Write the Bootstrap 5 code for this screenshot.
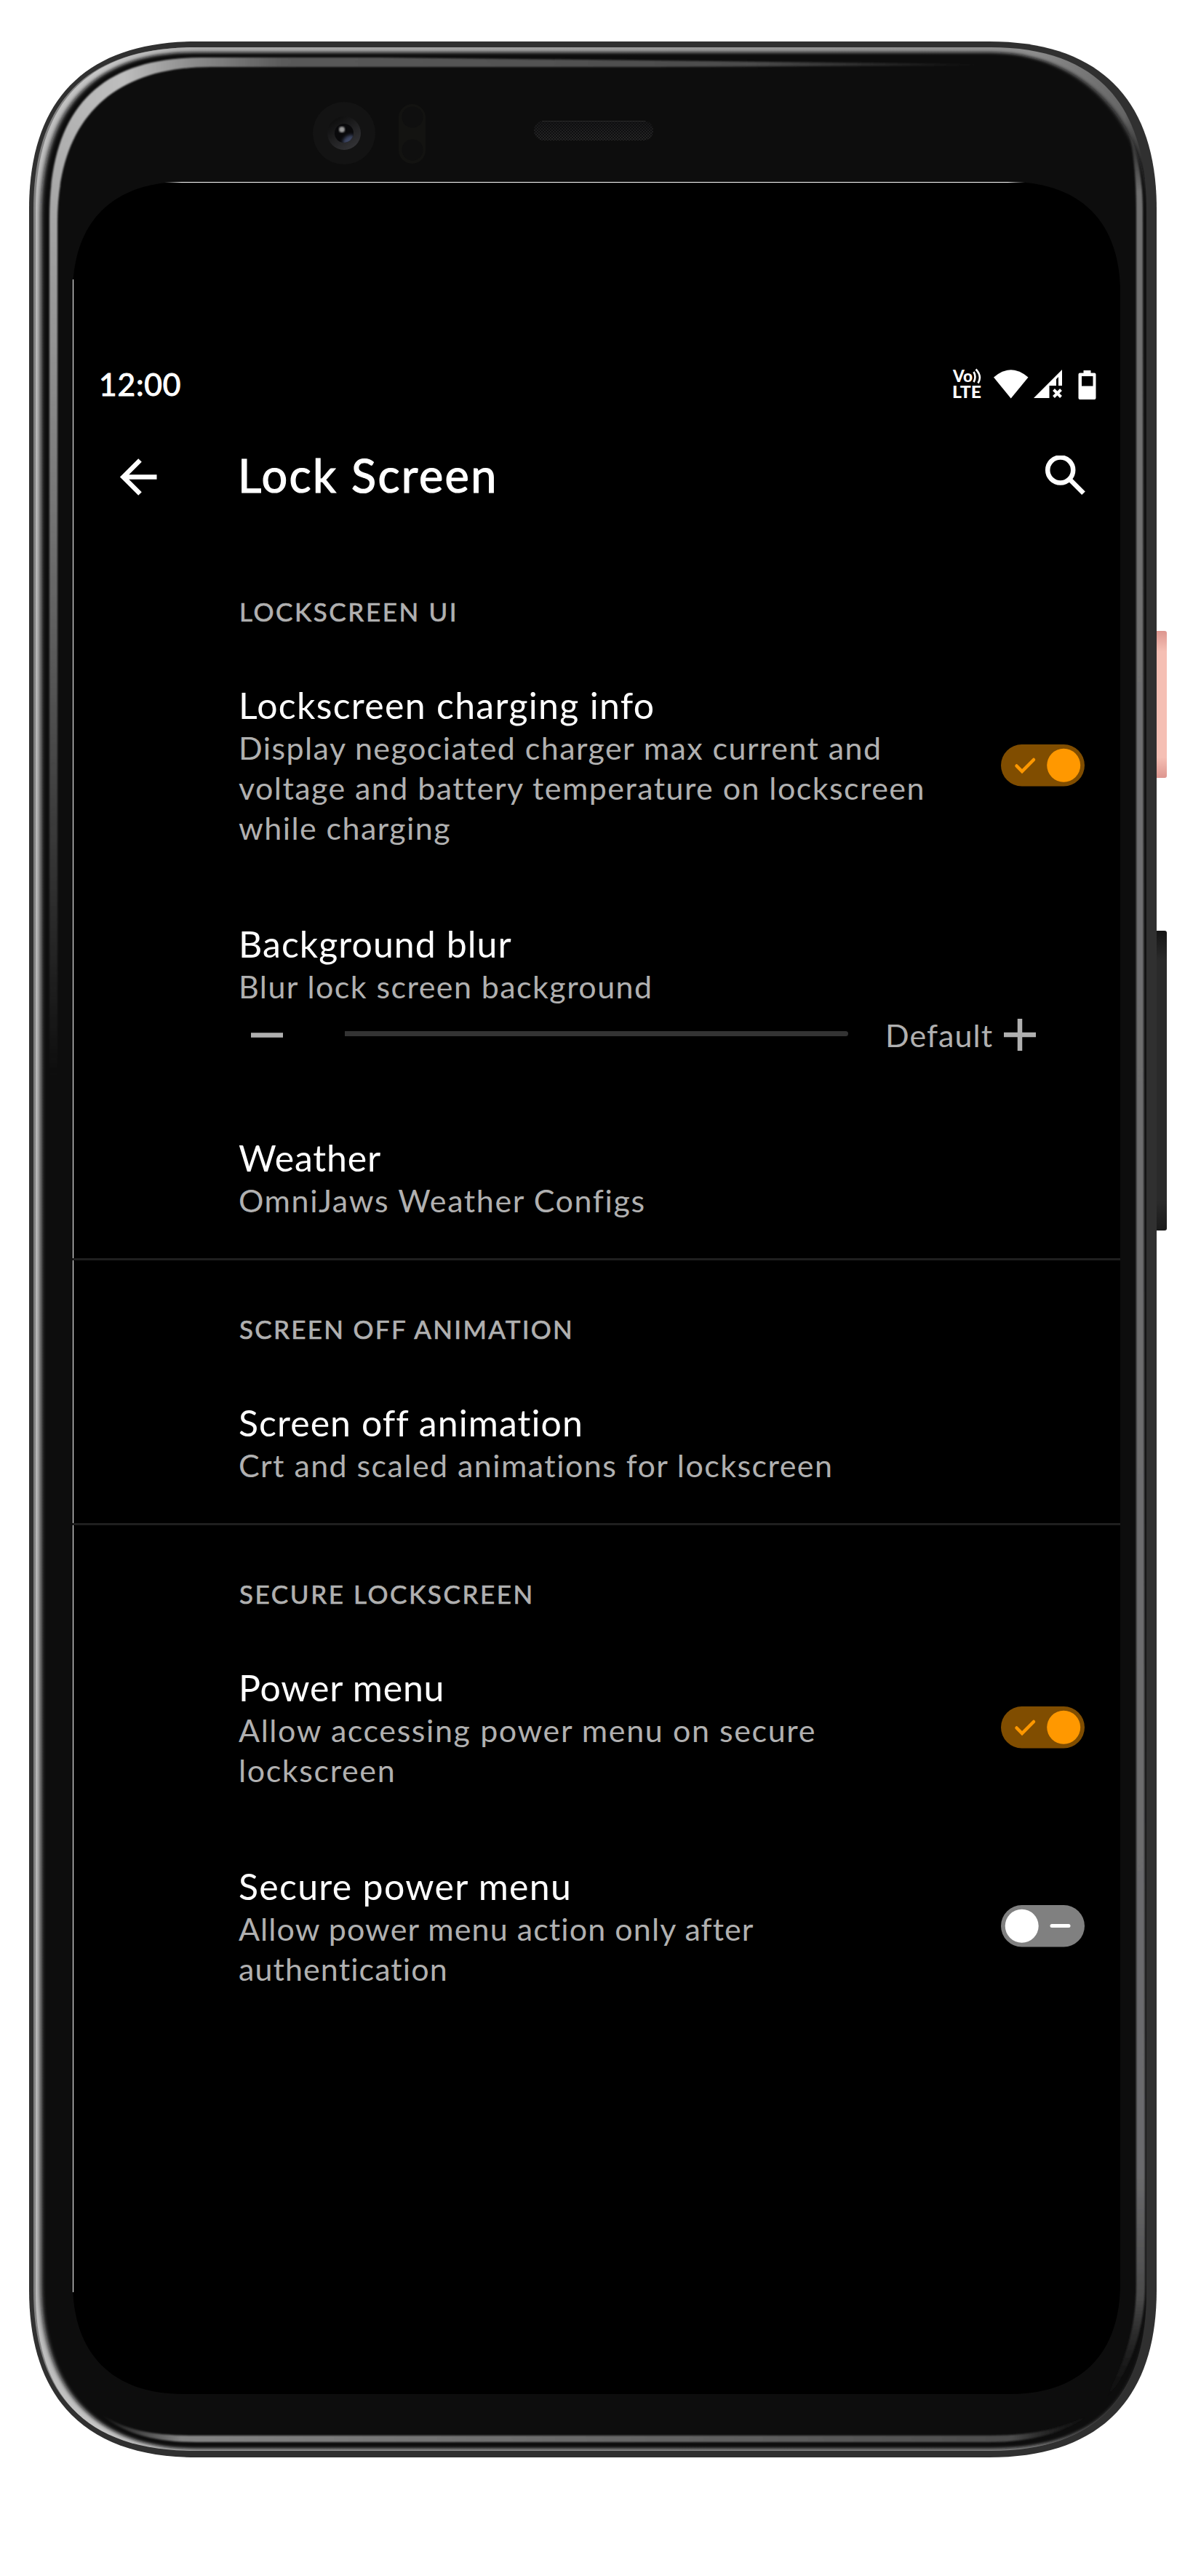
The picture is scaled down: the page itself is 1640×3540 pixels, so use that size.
<!DOCTYPE html>
<html lang="en">
<head>
<meta charset="utf-8">
<meta name="viewport" content="width=device-width, initial-scale=1">
<title>Lock Screen</title>
<link href="https://cdn.jsdelivr.net/npm/bootstrap@5.3.0/dist/css/bootstrap.min.css" rel="stylesheet">
<style>
  body{font-family:Lato,"Open Sans",sans-serif;background:#fff;width:1640px;height:3540px;overflow:hidden}
  .phone{width:1640px;height:3540px;padding:250px 100px}
  .phone-art{width:1640px;height:3540px;left:0;top:0}
  .screen{width:1440px;height:3040px;padding-top:240px;color:#fff}
  .statusbar{height:76px;padding:0 32px 0 36px}
  .clock{font-size:42.5px;line-height:50px;letter-spacing:.8px;-webkit-text-stroke:1px #fff}
  .toolbar{height:180px}
  .iconcol{width:227px;flex:none}
  .heading{font-size:63px;line-height:74px;letter-spacing:2.4px;-webkit-text-stroke:1.2px #fff;padding-bottom:7px}
  .cat{padding-left:229px;font-size:35px;line-height:42px;letter-spacing:2.6px;color:#b0b0b0;-webkit-text-stroke:.7px #b0b0b0;text-transform:uppercase}
  .cat-tight{letter-spacing:2.3px}
  .cat-first{margin-top:73px}
  .pref{padding-left:228px;padding-right:49.5px;margin-top:101px}
  .cat + .pref{margin-top:77px}
  .pref.pref-link{margin-top:99px}
  .ttl{font-size:50px;line-height:62px;letter-spacing:1.05px;white-space:nowrap}
  .ttl-wide{letter-spacing:1.3px}
  .ttl-snug{letter-spacing:.8px}
  .sum{font-size:43px;line-height:55px;letter-spacing:1.43px;color:#b0b0b0;white-space:nowrap}
  .sum-wide{letter-spacing:1.6px}
  .sum-snug{letter-spacing:1.08px}
  .rule{height:3px;background:#1f1f1f;margin-top:52px;margin-bottom:73px}
  .slider-row{height:78px}
  .track{width:692px;height:7px;border-radius:0 4px 4px 0;background:#333;margin-left:85px;margin-bottom:3px}
  .level{margin-left:51px;width:163px}
  svg{display:block;flex:none}
</style>
</head>
<body>
<main class="phone position-relative">
  <svg class="phone-art position-absolute" viewBox="0 0 1640 3540" aria-hidden="true">
    <defs>
      <linearGradient id="rim" x1="46" x2="1576" y1="0" y2="0" gradientUnits="userSpaceOnUse">
        <stop offset="0" stop-color="#bcbcbc"/><stop offset=".06" stop-color="#c6c6c6"/><stop offset=".15" stop-color="#a8a8a8"/><stop offset=".9" stop-color="#8c8c8c"/><stop offset=".98" stop-color="#666"/><stop offset="1" stop-color="#2c2c2c"/>
      </linearGradient>
      <linearGradient id="g1" x1="68" x2="1345" y1="0" y2="0" gradientUnits="userSpaceOnUse">
        <stop offset="0" stop-color="#b4b4b4"/><stop offset=".08" stop-color="#bdbdbd"/><stop offset=".15" stop-color="#8e8e8e"/><stop offset=".25" stop-color="#5a5a5a"/><stop offset=".75" stop-color="#4c4c4c"/><stop offset="1" stop-color="#4c4c4c" stop-opacity="0"/>
      </linearGradient>
      <linearGradient id="v1" x1="0" x2="0" y1="140" y2="1480" gradientUnits="userSpaceOnUse">
        <stop offset="0" stop-color="#fff"/><stop offset=".25" stop-color="#ccc"/><stop offset="1" stop-color="#000"/>
      </linearGradient>
      <mask id="m1" maskUnits="userSpaceOnUse" x="0" y="0" width="1640" height="3540"><rect width="1640" height="3540" fill="url(#v1)"/></mask>
      <linearGradient id="g2" x1="0" x2="0" y1="170" y2="3300" gradientUnits="userSpaceOnUse">
        <stop offset="0" stop-color="#707070" stop-opacity="0"/><stop offset=".03" stop-color="#707070"/><stop offset=".9" stop-color="#6b6b6d"/><stop offset=".955" stop-color="#4a4a4a"/><stop offset="1" stop-color="#222" stop-opacity="0"/>
      </linearGradient>
      <linearGradient id="g3" x1="140" x2="1500" y1="0" y2="0" gradientUnits="userSpaceOnUse">
        <stop offset="0" stop-color="#888" stop-opacity="0"/><stop offset=".08" stop-color="#858585"/><stop offset=".92" stop-color="#4d4d4d"/><stop offset="1" stop-color="#222" stop-opacity="0"/>
      </linearGradient>
      <linearGradient id="btnP" x1="0" x2="0" y1="0" y2="1"><stop offset="0" stop-color="#dd968f"/><stop offset=".14" stop-color="#f5bfb4"/><stop offset=".86" stop-color="#f5bfb4"/><stop offset="1" stop-color="#dd968f"/></linearGradient>
      <linearGradient id="btnK" x1="0" x2="0" y1="0" y2="1"><stop offset="0" stop-color="#151515"/><stop offset=".1" stop-color="#2a2a2a"/><stop offset=".9" stop-color="#2a2a2a"/><stop offset="1" stop-color="#1a1a1a"/></linearGradient>
      <linearGradient id="lens" x1="0" y1="0" x2=".7" y2="1"><stop offset=".2" stop-color="#101010"/><stop offset="1" stop-color="#333336"/></linearGradient>
      <linearGradient id="lt" x1="226" x2="1409" y1="0" y2="0" gradientUnits="userSpaceOnUse"><stop offset="0" stop-color="#fff" stop-opacity="0"/><stop offset=".02" stop-color="#fff"/><stop offset=".98" stop-color="#fff"/><stop offset="1" stop-color="#fff" stop-opacity="0"/></linearGradient>
      <pattern id="mesh" width="4" height="4" patternUnits="userSpaceOnUse"><rect width="4" height="4" fill="#0f0f10"/><rect width="2" height="2" fill="#272727"/><rect x="2" y="2" width="2" height="2" fill="#272727"/></pattern>
      <linearGradient id="shade" x1="0" x2="0" y1="0" y2="1"><stop offset="0" stop-color="#0d0d0f" stop-opacity=".6"/><stop offset="1" stop-color="#0d0d0f" stop-opacity="0"/></linearGradient>
      <filter id="b4" x="-5%" y="-5%" width="110%" height="110%"><feGaussianBlur stdDeviation="3 2"/></filter>
      <filter id="b1" x="-5%" y="-5%" width="110%" height="110%"><feGaussianBlur stdDeviation=".9"/></filter>
      <filter id="bl" x="-50%" y="-50%" width="200%" height="200%"><feGaussianBlur stdDeviation="2"/></filter>
      <clipPath id="inner"><path d="M49 288C49 140 121 65 268 65H1362C1504 65 1576 140 1576 288V3150C1576 3296 1504 3368 1362 3368H268C121 3368 49 3296 49 3150Z"/></clipPath>
      <clipPath id="lensclip"><circle cx="473" cy="183" r="13"/></clipPath>
    </defs>
    <rect x="1580" y="867" width="24" height="202" rx="3" fill="url(#btnP)"/>
    <rect x="1580" y="1279" width="24" height="412" rx="3" fill="url(#btnK)"/>
    <path fill="#303030" d="M40 287C40 136 119 57 270 57H1360C1511 57 1590 136 1590 287V3147C1590 3298 1511 3377 1360 3377H270C119 3377 40 3298 40 3147Z"/>
    <path fill="#828282" d="M46 288C46 139 119 65 268 65H800V3366H268C119 3366 46 3294 46 3147Z"/>
    <g clip-path="url(#inner)">
      <rect x="40" y="57" width="1550" height="3320" fill="url(#rim)"/>
      <path filter="url(#b4)" fill="#0d0d0f" d="M56 295C57 153 124 72 266 72H1362C1490 72 1579 170 1579 300V3150C1579 3300 1504 3365 1362 3365H268C128 3365 56 3280 56 3140Z"/>
    </g>
    <g filter="url(#b1)">
      <path mask="url(#m1)" fill="url(#g1)" d="M68 1480V300C68 152 134 79 278 79H520L1345 88V90L900 92H290C150 92 79 168 79 306V1480Z"/>
      <path fill="url(#g2)" d="M1548 165C1562 205 1571 240 1571 290L1574 2980V3140C1574 3200 1555 3260 1512 3308C1545 3255 1562 3200 1562 3140V290C1562 240 1558 205 1548 165Z"/>
      <path fill="url(#g3)" d="M135 3315C175 3342 215 3347 270 3347H1360C1430 3347 1465 3335 1505 3314C1465 3343 1420 3356 1360 3356H270C215 3356 170 3346 135 3315Z"/>
    </g>
    <path fill="#000" d="M100 402C100 305 155 250 252 250H1388C1485 250 1540 305 1540 402V3138C1540 3235 1485 3290 1388 3290H252C155 3290 100 3235 100 3138Z"/>
    <rect x="226" y="250" width="1183" height="1" fill="url(#lt)"/>
    <rect x="100" y="384" width="1" height="2766" fill="#fff"/>
    <circle cx="473" cy="183" r="43" fill="#131313"/>
    <circle cx="473" cy="183" r="23" fill="url(#lens)"/>
    <circle cx="473" cy="183" r="13" fill="#09090b"/>
    <g clip-path="url(#lensclip)"><ellipse cx="479" cy="192" rx="9" ry="5" transform="rotate(-35 479 192)" fill="#3e4663" filter="url(#bl)"/></g>
    <circle cx="470" cy="178" r="4" fill="#999" filter="url(#b1)"/>
    <rect x="548" y="143" width="37" height="82" rx="18.500" fill="#131311"/>
    <circle cx="567" cy="161" r="14.500" fill="#0f0f0f"/><circle cx="567" cy="206" r="14.500" fill="#0f0f0f"/>
    <rect x="734" y="166" width="164" height="27" rx="13.500" fill="url(#mesh)"/>
    <rect x="734" y="166" width="164" height="27" rx="13.500" fill="url(#shade)"/>
    <path d="M745 166.500H887" stroke="#2a2a2a"/>
  </svg>

  <section class="screen position-relative d-flex flex-column">
    <div class="statusbar d-flex align-items-center justify-content-between">
      <span class="clock">12:00</span>
      <svg width="200" height="50" viewBox="1308 503 200 50" fill="#fff">
        <text x="1310" y="525" font-size="22" font-weight="900" textLength="27" lengthAdjust="spacingAndGlyphs">Vo</text>
        <text x="1309" y="547" font-size="23.500" font-weight="900" textLength="40" lengthAdjust="spacingAndGlyphs">LTE</text>
        <path d="M1338.500 511Q1342.500 518 1338.500 525M1341.500 507.500Q1350.500 517 1344.500 526.500" fill="none" stroke="#fff" stroke-width="2.600"/>
        <path d="M1366 518.500Q1389.700 498 1413.500 518.500L1389.700 547.500Z"/>
        <path d="M1421 547L1460 508V530H1455V518L1452 521V530H1442.500V547Z"/>
        <path d="M1448.500 535.500L1458.500 545.500M1458.500 535.500L1448.500 545.500" stroke="#fff" stroke-width="4"/>
        <path fill-rule="evenodd" d="M1489.500 509H1499.500V512.500H1504.500Q1506.500 512.500 1506.500 514.500V547Q1506.500 549 1504.500 549H1484.500Q1482.500 549 1482.500 547V514.500Q1482.500 512.500 1484.500 512.500H1489.500ZM1487 517V530.500H1502.500V517Z"/>
      </svg>
    </div>
    <header class="toolbar d-flex align-items-center">
      <div class="iconcol">
        <svg class="ms-5" width="84" height="60" viewBox="148 626 84 60" fill="none" stroke="#fff" stroke-width="6.500"><path d="M215.500 655.500H170M192.500 632.500L169.500 655.500L192.500 678.500"/></svg>
      </div>
      <h1 class="heading fw-normal mb-0 me-auto">Lock Screen</h1>
      <svg width="108" height="60" viewBox="1432 626 108 60" fill="none" stroke="#fff" stroke-width="6.500"><circle cx="1457.700" cy="646" r="17.500"/><path d="M1470 658.300L1489.500 677.800"/></svg>
    </header>

    <div class="cat cat-first">Lockscreen UI</div>
    <div class="pref d-flex align-items-center justify-content-between">
      <div>
        <div class="ttl ttl-wide">Lockscreen charging info</div>
        <div class="sum">Display negociated charger max current and<br>voltage and battery temperature on lockscreen<br>while charging</div>
      </div>
      <svg width="115" height="58" viewBox="0 0 115 58"><rect width="115" height="57.500" rx="28.700" fill="#804d00"/><circle cx="86.200" cy="28.700" r="23" fill="#ff9800"/><path d="M21.500 29.500L29 37L45 21" fill="none" stroke="#ff9800" stroke-width="4.500" stroke-linecap="round"/></svg>
    </div>
    <div class="pref">
      <div class="ttl">Background blur</div>
      <div class="sum">Blur lock screen background</div>
      <div class="slider-row d-flex align-items-center">
        <svg width="61" height="44" viewBox="0 0 61 44"><path d="M17 22.500H61" stroke="#b0b0b0" stroke-width="6.500"/></svg>
        <div class="track"></div>
        <div class="sum sum-snug level">Default</div>
        <svg width="44" height="44" viewBox="0 0 44 44"><path d="M0 22H44M22 0V44" stroke="#b0b0b0" stroke-width="6.500"/></svg>
      </div>
    </div>
    <div class="pref pref-link">
      <div class="ttl ttl-snug">Weather</div>
      <div class="sum sum-wide">OmniJaws Weather Configs</div>
    </div>
    <div class="rule"></div>
    <div class="cat cat-tight">Screen off animation</div>
    <div class="pref">
      <div class="ttl">Screen off animation</div>
      <div class="sum">Crt and scaled animations for lockscreen</div>
    </div>
    <div class="rule"></div>
    <div class="cat">Secure lockscreen</div>
    <div class="pref d-flex align-items-center justify-content-between">
      <div>
        <div class="ttl ttl-snug">Power menu</div>
        <div class="sum sum-wide">Allow accessing power menu on secure<br>lockscreen</div>
      </div>
      <svg width="115" height="58" viewBox="0 0 115 58"><rect width="115" height="57.500" rx="28.700" fill="#804d00"/><circle cx="86.200" cy="28.700" r="23" fill="#ff9800"/><path d="M21.500 29.500L29 37L45 21" fill="none" stroke="#ff9800" stroke-width="4.500" stroke-linecap="round"/></svg>
    </div>
    <div class="pref d-flex align-items-center justify-content-between">
      <div>
        <div class="ttl ttl-wide">Secure power menu</div>
        <div class="sum sum-snug">Allow power menu action only after<br>authentication</div>
      </div>
      <svg width="115" height="58" viewBox="0 0 115 58"><rect width="115" height="57.500" rx="28.700" fill="gray"/><circle cx="28.700" cy="28.700" r="23" fill="#fff"/><path d="M70 28.500H93" stroke="#fff" stroke-width="5" stroke-linecap="round"/></svg>
    </div>
  </section>
</main>
<script src="https://cdn.jsdelivr.net/npm/bootstrap@5.3.0/dist/js/bootstrap.bundle.min.js"></script>
</body>
</html>
